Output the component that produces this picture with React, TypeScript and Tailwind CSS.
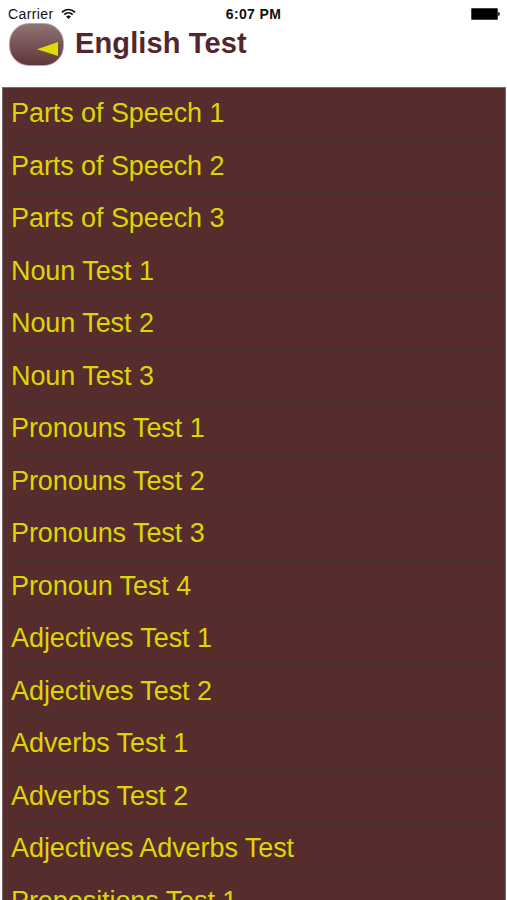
const tests = [
  'Parts of Speech 1',
  'Parts of Speech 2',
  'Parts of Speech 3',
  'Noun Test 1',
  'Noun Test 2',
  'Noun Test 3',
  'Pronouns Test 1',
  'Pronouns Test 2',
  'Pronouns Test 3',
  'Pronoun Test 4',
  'Adjectives Test 1',
  'Adjectives Test 2',
  'Adverbs Test 1',
  'Adverbs Test 2',
  'Adjectives Adverbs Test',
  'Prepositions Test 1',
];

function WifiIcon() {
  return (
    <svg className="ml-[7px] h-[12px] w-[15px]" viewBox="0 0 16 12" fill="none" stroke="#111" strokeWidth="1.8">
      <path d="M1 4.2C4.9 0.2 11.1 0.2 15 4.2" />
      <path d="M3.5 6.7C6.1 4.2 9.9 4.2 12.5 6.7" />
      <path d="M5.4 8.6C6.9 7.3 9.1 7.3 10.6 8.6L8 11.2Z" fill="#111" stroke="none" />
    </svg>
  );
}

function StatusBar() {
  return (
    <div className="grid h-[22px] shrink-0 grid-cols-3 items-center pt-[5px] text-[14px] leading-[17px] text-[#111]">
      <div className="flex items-center pl-[8px]">
        <span className="pt-px tracking-[0.4px]">Carrier</span>
        <WifiIcon />
      </div>
      <div className="text-center text-[14px] font-bold tracking-[0.35px] whitespace-nowrap">6:07 PM</div>
      <div className="flex items-center justify-end pr-[7px]">
        <div className="h-[12px] w-[27px] rounded-[1px] border border-[#444] bg-black" />
        <div className="h-[4px] w-[2px] rounded-r-full bg-[#333]" />
      </div>
    </div>
  );
}

export default function App() {
  return (
    <div className="flex h-[900px] w-[507px] flex-col overflow-hidden bg-white font-['Liberation_Sans',Arial,sans-serif]">
      <StatusBar />
      <header className="flex h-[65px] shrink-0 items-start pl-[9px]">
        <button
          aria-label="Back"
          className="mt-[1px] flex h-[43px] w-[55px] items-center justify-end rounded-[20px] border border-[#b9a8a8] bg-linear-to-b from-[#8f7476] to-[#603538] pr-[5px]"
        >
          <svg className="mt-[8px] h-[14px] w-[21px]" viewBox="0 0 21 14">
            <path d="M0 7.2L21 0V14Z" fill="#dedc00" />
          </svg>
        </button>
        <h1 className="ml-[11px] mt-[4px] text-[29px] leading-[34px] font-bold tracking-[0.12px] text-[#52262a]">
          English Test
        </h1>
      </header>
      <ul className="ml-[2px] min-h-0 w-[504px] flex-1 overflow-hidden border-x border-t border-[#80676c] bg-[#562c2d]">
        {tests.map((name) => (
          <li key={name} className="flex h-[52.5px] flex-col justify-between">
            <span className="pt-[9px] pl-[8px] text-[27px] leading-[32px] tracking-[-0.07px] whitespace-nowrap text-[#ded505]">
              {name}
            </span>
            <span className="mx-[3px] h-[2px] shrink-0 bg-[#48322d]" />
          </li>
        ))}
      </ul>
    </div>
  );
}
